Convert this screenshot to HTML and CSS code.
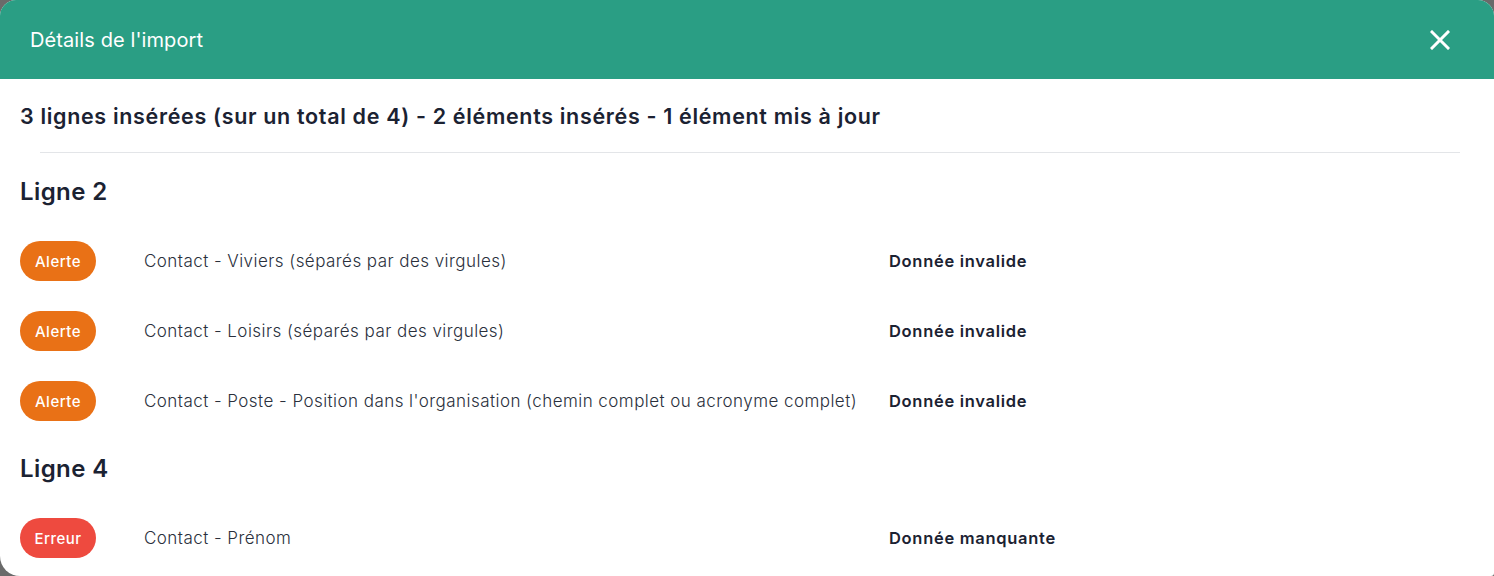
FILE: index.html
```html
<!DOCTYPE html>
<html lang="fr">
<head>
<meta charset="utf-8">
<title>Détails de l'import</title>
<link rel="stylesheet" href="styles.css">
</head>
<body>
<div class="modal">
  <header class="modal-header">
    <h1 class="modal-title">Détails de l'import</h1>
    <button class="close-btn" aria-label="Fermer">
      <svg width="20" height="20" viewBox="0 0 20 20"><path d="M2 2 L18 18 M18 2 L2 18" stroke="#fff" stroke-width="3" stroke-linecap="square"/></svg>
    </button>
  </header>
  <div class="modal-body">
    <h2 class="summary">3 lignes insérées (sur un total de 4) - 2 éléments insérés - 1 élément mis à jour</h2>
    <hr class="divider">
    <section class="group">
      <h3 class="group-title">Ligne 2</h3>
      <div class="row">
        <span class="badge badge-warn">Alerte</span>
        <span class="field">Contact - Viviers (séparés par des virgules)</span>
        <span class="reason">Donnée invalide</span>
      </div>
      <div class="row">
        <span class="badge badge-warn">Alerte</span>
        <span class="field">Contact - Loisirs (séparés par des virgules)</span>
        <span class="reason">Donnée invalide</span>
      </div>
      <div class="row">
        <span class="badge badge-warn">Alerte</span>
        <span class="field">Contact - Poste - Position dans l'organisation (chemin complet ou acronyme complet)</span>
        <span class="reason">Donnée invalide</span>
      </div>
    </section>
    <section class="group">
      <h3 class="group-title">Ligne 4</h3>
      <div class="row">
        <span class="badge badge-error">Erreur</span>
        <span class="field">Contact - Prénom</span>
        <span class="reason">Donnée manquante</span>
      </div>
    </section>
  </div>
</div>
</body>
</html>
```
FILE: styles.css
```css
html, body {
  margin: 0;
  padding: 0;
}
body {
  background: #6a6a6a;
  font-family: Inter, "Noto Sans", sans-serif;
  color: #1b2232;
  overflow: hidden;
  height: 576px;
}
.modal {
  background: #fff;
  border-radius: 16px 16px 3px 20px;
  width: 1494px;
  height: 576px;
  overflow: hidden;
}
.modal-header {
  background: #2a9e84;
  height: 79px;
  display: flex;
  align-items: center;
  justify-content: space-between;
  padding: 0 44px 0 30px;
  box-sizing: border-box;
}
.modal-title {
  margin: 0;
  color: #fff;
  font-size: 20px;
  font-weight: 400;
  letter-spacing: 0.1px;
}
.close-btn {
  background: none;
  border: 0;
  padding: 0;
  width: 20px;
  height: 20px;
  display: flex;
  cursor: pointer;
}
.modal-body {
  padding: 0 20px;
}
.summary {
  margin: 0;
  padding-top: 24px;
  font-size: 21.5px;
  font-weight: 600;
  line-height: 26px;
  letter-spacing: 0.67px;
}
.divider {
  border: 0;
  border-top: 1px solid #e3e5e8;
  margin: 23px 14px 0 20px;
}
.group-title {
  margin: 0;
  font-size: 24px;
  font-weight: 600;
  line-height: 28px;
  padding-top: 25px;
  padding-bottom: 20px;
  letter-spacing: 0.4px;
}
.group + .group .group-title {
  padding-top: 19px;
}
.row {
  display: grid;
  grid-template-columns: 124px 745px 1fr;
  align-items: center;
  height: 70px;
}
.badge {
  width: 76px;
  height: 40px;
  border-radius: 20px;
  color: #fff;
  font-size: 15px;
  font-weight: 500;
  letter-spacing: 0.5px;
  display: flex;
  align-items: center;
  justify-content: center;
}
.badge-warn {
  background: #e97116;
}
.badge-error {
  background: #ee4a3f;
}
.field {
  font-size: 17px;
  font-weight: 300;
  color: #2a303c;
  white-space: nowrap;
  letter-spacing: 0.45px;
}
.reason {
  font-size: 16.5px;
  font-weight: 600;
  color: #1b2232;
  letter-spacing: 0.7px;
}
```
